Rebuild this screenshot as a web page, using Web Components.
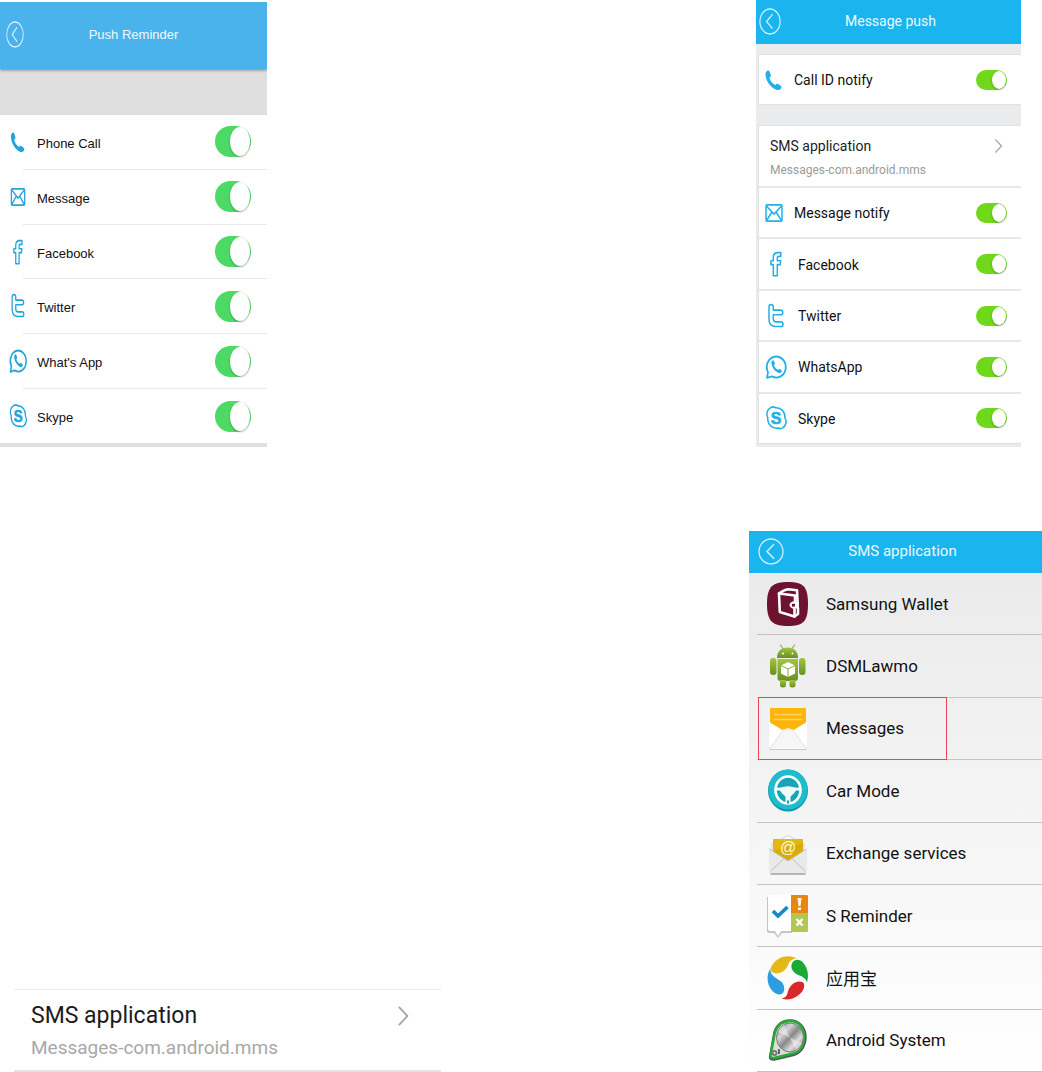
<!DOCTYPE html>
<html lang="en">
<head>
<meta charset="UTF-8">
<meta name="viewport" content="width=device-width, initial-scale=1.0">
<title>Push Reminder</title>
<style>
    * { box-sizing: border-box; }
    body {
        margin: 0;
        background: #fff;
        color: #1c1c1c;
        font-family: Roboto, "Noto Sans CJK SC", sans-serif;
    }
    .row {
        display: grid;
        align-items: start;
    }
    .settings { grid-template-columns: 267fr 489fr 265fr 21fr; }
    .picker {
        grid-template-columns: 14fr 427fr 308fr 293fr;
        align-items: end;
        margin-top: 84px;
    }
    .settings > :last-child { grid-column: 3; }
    .picker > :first-child { grid-column: 2; }
    .picker > :last-child { grid-column: 4; }

    .ios {
        margin-top: 2px;
        min-height: 445px;
        --bar: #4bb3ec;
        --bar-height: 67px;
        --bar-start: 6px;
        --bar-end: 24px;
        --bar-shadow: 0 1px 3px rgba(60, 80, 95, .7);
        --title-font: 13px "Liberation Sans", sans-serif;
        --back-width: 18px;
        --body: #dfdfdf;
        --row-font: 13px "Liberation Sans", sans-serif;
        --row-start: 6px;
        --row-end: 16px;
        --text-top: 3px;
        --icon-color: #22a4dc;
        --icon-width: 20px;
        --icon-box: 24px;
        --icon-gap: 7px;
        --line: 1px;
        --line-color: #e9e9e9;
        --line-start: 23px;
        --toggle-width: 36px;
        --toggle-height: 31px;
        --knob-width: 20px;
        --toggle-color: #4cd964;
    }
    .android {
        min-height: 447px;
        --bar-height: 44px;
        --bar-start: 3px;
        --bar-end: 21px;
        --title-font: 14px Roboto, sans-serif;
        --back-width: 22px;
        --body: #e9ebed;
        --row-font: 14px Roboto, sans-serif;
    }
    .apps {
        min-height: 541px;
        --bar-height: 42px;
        --bar-start: 9px;
        --bar-end: 21px;
        --title-font: 15px Roboto, sans-serif;
        --back-width: 26px;
        --body: linear-gradient(#e9e9e9, #fff);
    }
    .ios setting-group { margin: 46px 0 4px; }
    .android setting-group {
        margin: 10px 0 0 2px;
        border: 1px solid #dfe1e3;
        border-right: 0;
    }
    .android setting-group + setting-group { margin-top: 20px; }
    .android setting-group:last-child { margin-bottom: 3px; }
    .grow, app-row { flex: 1; }
    .compact {
        height: 51px;
        --icon-box: 20px;
    }
    .mail { --icon-box: 20px; }
    .card {
        border-top: 1px solid #ececec;
        border-bottom: 2px solid #e2e2e2;
        --nav-padding: 11px 32px 5px 17px;
        --nav-font: 23px/30px Roboto, sans-serif;
        --nav-sub: 19px/34px Roboto, sans-serif;
        --nav-sub-color: #a8a8a8;
        --chevron: 22px;
    }
</style>
</head>
<body>
<main>
    <div class="row settings">
        <phone-screen class="ios" heading="Push Reminder">
            <setting-group class="grow">
                <toggle-row icon="phone">Phone Call</toggle-row>
                <toggle-row icon="mail">Message</toggle-row>
                <toggle-row icon="facebook">Facebook</toggle-row>
                <toggle-row icon="twitter">Twitter</toggle-row>
                <toggle-row icon="whatsapp">What's App</toggle-row>
                <toggle-row icon="skype">Skype</toggle-row>
            </setting-group>
        </phone-screen>
        <phone-screen class="android" heading="Message push">
            <setting-group class="compact">
                <toggle-row icon="phone">Call ID notify</toggle-row>
            </setting-group>
            <setting-group class="grow">
                <nav-row>SMS application<span slot="detail">Messages-com.android.mms</span></nav-row>
                <toggle-row class="mail" icon="mail">Message notify</toggle-row>
                <toggle-row icon="facebook">Facebook</toggle-row>
                <toggle-row icon="twitter">Twitter</toggle-row>
                <toggle-row icon="whatsapp">WhatsApp</toggle-row>
                <toggle-row icon="skype">Skype</toggle-row>
            </setting-group>
        </phone-screen>
    </div>
    <div class="row picker">
        <nav-row class="card">SMS application<span slot="detail">Messages-com.android.mms</span></nav-row>
        <phone-screen class="apps" heading="SMS application">
            <app-row icon="wallet">Samsung Wallet</app-row>
            <app-row icon="robot">DSMLawmo</app-row>
            <app-row icon="messages" marked>Messages</app-row>
            <app-row icon="car">Car Mode</app-row>
            <app-row icon="exchange">Exchange services</app-row>
            <app-row icon="reminder">S Reminder</app-row>
            <app-row icon="swirl">应用宝</app-row>
            <app-row icon="system">Android System</app-row>
        </phone-screen>
    </div>
</main>

<script>
    // line icons, 24 x 24
    const HANDSET = 'M3.500 3.800C5 2.200 6.600 2.500 7.200 4l1.300 3.200c.4 1-.1 1.900-1.500 2.600.8 3.300 3.200 5.900 6.500 7.300 1-1.200 1.900-1.500 2.900-.9l2.900 1.800c1.200.8 1.200 2 0 3.200-1.800 1.500-3.900 1.300-6.100.2C8 18.800 4 14 3 8.600c-.4-2-.5-3.500.5-4.800z';
    const LINE_ICONS = {
        phone: `<path fill="currentColor" stroke="none" transform="translate(1 .8) scale(.92)" d="${HANDSET}"/>`,
        mail: `<rect x="4" y="4.500" width="16" height="15" rx="1"/>
            <path d="M4.500 5.500 12 13l7.500-7.500M4.500 19l5.500-8M19.500 19 14 11"/>`,
        facebook: '<path d="M16.800 1.500h-3C10.700 1.500 9.300 3.300 9.300 6v3H7v3.600h2.300v10.200h4V12.600h2.900l.5-3.600h-3.400V6.400c0-1 .5-1.400 1.500-1.400h2z"/>',
        twitter: '<path d="M5 3.600C5 2.200 5.900 1.500 7.100 1.500s2.200.7 2.200 2.100v3h7.300c1.400 0 2.200.8 2.200 2.100s-.8 2.100-2.200 2.100H9.300v3.700c0 1.900.9 2.900 2.800 2.900h4.700c1.400 0 2.200.8 2.200 2.100s-.8 2.200-2.200 2.200h-5.200C7.400 21.700 5 19.300 5 15.400z"/>',
        whatsapp: `<path stroke-width="1.800" d="M3 22l1-5.200A9.500 9.700 0 1 1 8 20.700z"/>
            <path fill="currentColor" stroke="none" transform="translate(5.800 4.200) scale(.6)" d="${HANDSET}"/>`,
        skype: `<path d="M7 2.200c1.600-.7 3.300-.4 4.700.4 5.600-.3 9.700 4 9.300 9.500 1 1.400 1.400 3 .9 4.800-1 4-4.600 5.800-8.200 4.400-5.800.9-10.400-3.700-9.900-9.500C1.800 8.400 3 3.900 7 2.200z"/>
            <text x="12.200" y="17.800" font-family="Liberation Sans, sans-serif" font-size="16" font-weight="700" text-anchor="middle" fill="currentColor" stroke="currentColor" stroke-width=".6">S</text>`
    };

    // application icons, 42 x 44
    const APP_ICONS = {
        wallet: `<path fill="#6f1230" d="M21 0C36 0 41 4 41 22S36 44 21 44 0 40 0 22 6 0 21 0z"/>
            <g fill="none" stroke="#fff" stroke-width="2.600" stroke-linejoin="round" stroke-linecap="round">
                <path d="M28 19.500v-6L12 11.500l.8 18.500L27.500 34.500V27"/>
                <path d="M12 11.500c3-2.200 6-3.800 9-4.200l9 .9.500 11M27.500 34.500l3.500-2.500V26"/></g>
            <path fill="#fff" d="M25.500 19.500H32V26.500h-6.500c-4-1.500-4-5.500 0-7z"/>
            <path fill="#6f1230" d="M25 21.800h3v2.800h-3z"/>`,
        robot: `<defs><linearGradient id="g" x2="0" y2="1"><stop stop-color="#a3c63a"/><stop offset="1" stop-color="#678f25"/></linearGradient></defs>
            <path stroke="#9aa88c" stroke-width="1.300" stroke-linecap="round" d="M13.500 1l3 4.500M27.500 1l-3 4.500"/>
            <g fill="url(#g)"><path d="M10 14C10 7.500 14 3.500 20.500 3.500S31 7.500 31 14z"/>
                <path d="M10.500 15h20.500v19q0 3-3 3H13.500q-3 0-3-3z"/>
                <rect x="3" y="14" width="6.500" height="17" rx="3"/><rect x="32" y="14" width="6.500" height="17" rx="3"/>
                <path d="M13 36h6v5q0 2.500-3 2.500T13 41zM22.500 36h6v5q0 2.500-3 2.500t-3-2.500z"/></g>
            <circle cx="16" cy="9.500" r="1" fill="#fff"/><circle cx="25.500" cy="9.500" r="1" fill="#fff"/>
            <path fill="#fff" d="M21 18l7 3.500v8L21 33l-7-3.500v-8z"/>
            <path fill="none" stroke="#86a841" d="M14 21.500l7 3.500 7-3.500M21 25v8"/>`,
        messages: `<path fill="#c9c9c9" d="M2 15h38v27q0 2-2 2H4q-2 0-2-2z"/>
            <path fill="#fff" d="M2 15h38v26q0 2-2 2H4q-2 0-2-2z"/>
            <path fill="#ffb40a" d="M3 3q0-1 1-1h34q1 0 1 1v13.500L26.500 24q-5.500-3-11 0L3 16.500z"/>
            <path stroke="#ffd36a" stroke-width="1.300" d="M7 8.500h28M7 13.500h28"/>
            <path fill="#f6f6f6" d="M3 42.500L17 23.500q4-2 8 0L39 42.500z"/>
            <path fill="none" stroke="#e1e1e1" d="M3 42L16.500 24q4.500-2.300 9 0L39 42"/>`,
        car: `<ellipse cx="21" cy="21.500" rx="20" ry="21" fill="#0b98a8"/><ellipse cx="21" cy="20.500" rx="19.500" ry="20" fill="#1fbccb"/>
            <ellipse cx="21" cy="21" rx="12.500" ry="13.500" fill="#14a6b6" stroke="#fff" stroke-width="2.600"/>
            <path fill="#f1fbfb" d="M9 18.500q4 .5 7-.5 5-1.500 10 0 3 1 7 .5v3h-4c-1.500 3-4.500 4.500-5.500 6.500v6.500h-5v-6.500c-1-2-4-3.500-5.500-6.500H9z"/>
            <path stroke="#14a6b6" stroke-width="2" d="M21 31.500v3"/>`,
        exchange: `<path fill="#fff" stroke="#d4d4d4" d="M5 13L21 4.500 37 13v14H5z"/>
            <path fill="#d9ab0c" d="M6 8h30v13L21 30 6 21z"/><path fill="#ecc51e" d="M6 8h30v4L6 20z" opacity=".5"/>
            <text x="21" y="22" font-family="Liberation Sans, sans-serif" font-size="16" text-anchor="middle" fill="#fff8d8">@</text>
            <path fill="#e9e9e9" d="M2 18l19 12 19-12v23q0 2-2 2H4q-2 0-2-2z"/>
            <path fill="none" stroke="#bfbfbf" d="M2.500 18L21 30l18.500-12M4 40l13-12.500M38 40L25 27.500"/>
            <path stroke="#a2a2a2" stroke-width="1.500" d="M3.500 43h35"/>`,
        reminder: `<path fill="#c5c5c5" d="M0 3h25v36H15l-4 5-4-5H2q-2 0-2-2z"/>
            <path fill="#fff" d="M1 2.500Q1 1 3 1h21v36H14l-3 5-3-5H3q-2 0-2-2z"/>
            <path fill="#e9860e" d="M24 1h16q1 0 1 1v17H24z"/><path fill="#b2c750" d="M24 19h17v18q0 1-1 1H24z"/>
            <path fill="none" stroke="#1688c6" stroke-width="3.600" d="M6 17l5 5 9.500-9"/>
            <path fill="#fff" d="M30.500 4h4l-1 8h-2zM31 13.500h3V16h-3z"/>
            <path stroke="#fff" stroke-width="2.400" d="M29.500 25l6 6.500M35.500 25l-6 6.500"/>`,
        swirl: `<path fill="#e3b91a" d="M3.500 12.500C7 4 15-.5 23 .5c3 .3 5 1 6.500 2-5 .5-7 3-8.500 6.500-2.500 6.500-9 9.500-14 8-2.500-.8-3.800-2.500-3.500-4.500z"/>
            <path fill="#19a935" d="M25 7.500c2-5 8-4.500 11-1 5 5.500 6 13 4 20-1.500-4.500-4-5.500-7.500-7-6.500-2.500-9.500-7.500-7.500-12z"/>
            <path fill="#d8282c" d="M37 28c1 5-2.500 9.500-7.500 12.500-5 3.500-10 3.500-15 2 5-1 5.500-3.500 6.500-7 1.500-6 6.500-10 11.500-10 2.700 0 4.200 1 4.500 2.500z"/>
            <path fill="#2f9be0" d="M3 13c-4 7.500-3 16 2.500 22 3.500 4 9 4.500 10.800 1.500 2-3.800 1-8.500-2.800-11.500C8 21.500 4 19.500 3 13z"/>`,
        system: `<defs><linearGradient id="m" x2="1" y2="1"><stop stop-color="#707070"/><stop offset=".3" stop-color="#d6d6d6"/><stop offset=".5" stop-color="#888"/><stop offset=".7" stop-color="#dedede"/><stop offset="1" stop-color="#5f5f5f"/></linearGradient></defs>
            <path fill="#bcc5bc" stroke="#555" stroke-width="3.400" stroke-linejoin="round" d="M3.500 39L8 14C11 6 16 3 23 3c9 0 15 7 15 16 0 10-6 17-14 18L7 41q-4 0-3.500-2z"/>
            <path fill="#dadfda" stroke="#22ae35" stroke-width="2.400" stroke-linejoin="round" d="M3.500 38L8 14C11 6 16 3 23 3c9 0 14 7 14 16 0 10-5 16-13 17L7 40q-4 0-3.500-2z"/>
            <ellipse cx="23" cy="19.500" rx="13.500" ry="14.500" fill="url(#m)" stroke="#777"/>
            <path fill="#f4f4f4" opacity=".5" d="M23 19.500L11 14q2-5 6-7zM23 19.500L35 25q-2 5-6 7z"/>
            <circle cx="7.500" cy="35" r="3" fill="#777"/><circle cx="7.500" cy="35" r="1" fill="#eee"/><path fill="#666" d="M11 31h2v5h-2z"/>`
    };

    class PhoneScreen extends HTMLElement {
        constructor() {
            super();
            this.attachShadow({ mode: 'open' });
        }

        connectedCallback() {
            this.shadowRoot.innerHTML = `
                <style>
                    * { box-sizing: border-box; }
                    :host {
                        display: flex;
                        flex-direction: column;
                        min-width: 0;
                        overflow: hidden;
                        box-sizing: border-box;
                        background: var(--body);
                    }
                    header {
                        display: flex;
                        align-items: center;
                        height: var(--bar-height);
                        flex: none;
                        padding: 0 var(--bar-end) 2px var(--bar-start);
                        background: var(--bar, #1ab4ee);
                        box-shadow: var(--bar-shadow, none);
                        color: #fff;
                    }
                    h1 {
                        flex: 1;
                        margin: 0;
                        text-align: center;
                        font: var(--title-font);
                        opacity: .92;
                    }
                    button {
                        display: flex;
                        padding: 0;
                        border: 0;
                        background: none;
                        color: inherit;
                        cursor: pointer;
                    }
                    svg {
                        width: var(--back-width);
                        height: 27px;
                        fill: none;
                        stroke: currentColor;
                        opacity: .8;
                    }
                </style>
                <header>
                    <button type="button" aria-label="Back">
                        <svg viewBox="0 0 26 26" preserveAspectRatio="none"><circle cx="13" cy="13" r="12" stroke-width="1.300"/><path stroke-width="1.500" d="M16 6l-7 7 7 7"/></svg>
                    </button>
                    <h1>${this.getAttribute('heading')}</h1>
                </header>
                <slot></slot>
            `;
        }
    }

    class SettingGroup extends HTMLElement {
        constructor() {
            super();
            this.attachShadow({ mode: 'open' });
            this.shadowRoot.innerHTML = `
                <style>
                    :host {
                        display: flex;
                        flex-direction: column;
                        box-sizing: border-box;
                        background: #fff;
                    }
                    ::slotted(toggle-row) { flex: 1; }
                </style>
                <slot></slot>
            `;
        }
    }

    class ToggleRow extends HTMLElement {
        constructor() {
            super();
            this.attachShadow({ mode: 'open' });
        }

        connectedCallback() {
            this.shadowRoot.innerHTML = `
                <style>
                    :host {
                        display: flex;
                        flex-direction: column;
                        color: #111;
                        font: var(--row-font);
                    }
                    label {
                        flex: 1;
                        display: flex;
                        align-items: center;
                        padding: 0 var(--row-end, 14px) 0 var(--row-start, 5px);
                    }
                    .icon {
                        display: flex;
                        justify-content: center;
                        width: var(--icon-box, 24px);
                        margin-right: var(--icon-gap, 10px);
                    }
                    svg {
                        flex: none;
                        width: var(--icon-width, 24px);
                        height: 26px;
                        color: var(--icon-color, #22b0ea);
                        fill: none;
                        stroke: currentColor;
                        stroke-width: 1.500;
                        stroke-linejoin: round;
                    }
                    .text {
                        flex: 1;
                        padding-top: var(--text-top, 1px);
                    }
                    input {
                        appearance: none;
                        display: flex;
                        flex: none;
                        justify-content: flex-start;
                        box-sizing: border-box;
                        width: var(--toggle-width, 31px);
                        height: var(--toggle-height, 20px);
                        margin: 0;
                        padding: 1px;
                        border-radius: 16px;
                        background: #d5d5d5;
                        cursor: pointer;
                    }
                    input:checked {
                        justify-content: flex-end;
                        background: var(--toggle-color, #6fd81a);
                    }
                    input::before {
                        content: "";
                        width: var(--knob-width, 14px);
                        border-radius: 50%;
                        background: #fff;
                        box-shadow: 0 1px 2px rgba(0, 0, 0, .3);
                    }
                    hr {
                        width: auto;
                        height: var(--line, 2px);
                        margin: 0 0 0 var(--line-start, 0);
                        border: 0;
                        background: var(--line-color, #e6e7e9);
                    }
                    :host(:last-child) hr { display: none; }
                </style>
                <label>
                    <span class="icon"><svg viewBox="0 0 24 24" preserveAspectRatio="none" aria-hidden="true">${LINE_ICONS[this.getAttribute('icon')]}</svg></span>
                    <span class="text"><slot></slot></span>
                    <input type="checkbox" role="switch" checked>
                </label>
                <hr>
            `;
        }
    }

    class NavRow extends HTMLElement {
        constructor() {
            super();
            this.attachShadow({ mode: 'open' });
            this.shadowRoot.innerHTML = `
                <style>
                    :host {
                        display: block;
                        box-sizing: border-box;
                        background: #fff;
                        border-bottom: 2px solid #e6e7e9;
                    }
                    a {
                        display: grid;
                        grid-template-columns: 1fr auto;
                        padding: var(--nav-padding, 8px 18px 4px 11px);
                        color: inherit;
                        text-decoration: none;
                        font: var(--nav-font, 14px/24px Roboto, sans-serif);
                    }
                    .detail {
                        grid-column: 1 / -1;
                        font: var(--nav-sub, 12px/24px Roboto, sans-serif);
                        color: var(--nav-sub-color, #9b9b9b);
                    }
                    svg {
                        align-self: center;
                        width: auto;
                        height: var(--chevron, 16px);
                        fill: none;
                        stroke: #a6a6a6;
                        stroke-width: 1.500;
                    }
                </style>
                <a href="#">
                    <span><slot></slot></span>
                    <svg viewBox="0 0 10 18" aria-hidden="true"><path d="M1.500 1.500L8.500 9l-7 7.500"/></svg>
                    <span class="detail"><slot name="detail"></slot></span>
                </a>
            `;
        }
    }

    class AppRow extends HTMLElement {
        constructor() {
            super();
            this.attachShadow({ mode: 'open' });
        }

        connectedCallback() {
            this.shadowRoot.innerHTML = `
                <style>
                    :host {
                        display: flex;
                        position: relative;
                        margin-left: 8px;
                        border-bottom: 1px solid #c4c4c4;
                    }
                    :host([marked]) { z-index: 1; }
                    :host([marked])::before {
                        content: "";
                        position: absolute;
                        inset: -1px auto -1px 1px;
                        width: 189px;
                        box-sizing: border-box;
                        border: 1px solid #e8455a;
                        pointer-events: none;
                    }
                    button {
                        flex: 1;
                        display: flex;
                        align-items: center;
                        gap: 17px;
                        padding: 8px 10px;
                        border: 0;
                        background: none;
                        color: #111;
                        text-align: left;
                        font: 17px Roboto, "Noto Sans CJK SC", sans-serif;
                        cursor: pointer;
                    }
                    svg {
                        flex: none;
                        width: 42px;
                        height: 44px;
                    }
                </style>
                <button type="button">
                    <svg viewBox="0 0 42 44" aria-hidden="true">${APP_ICONS[this.getAttribute('icon')]}</svg>
                    <span><slot></slot></span>
                </button>
            `;
        }
    }

    customElements.define('phone-screen', PhoneScreen);
    customElements.define('setting-group', SettingGroup);
    customElements.define('toggle-row', ToggleRow);
    customElements.define('nav-row', NavRow);
    customElements.define('app-row', AppRow);
</script>
</body>
</html>
